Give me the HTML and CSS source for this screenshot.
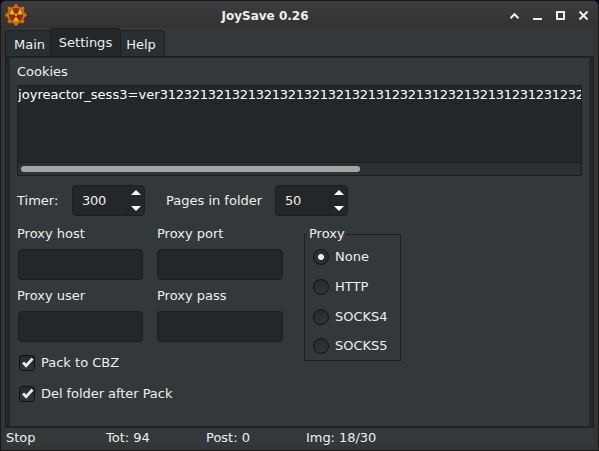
FILE: index.html
```html
<!DOCTYPE html>
<html lang="en">
<head>
<meta charset="utf-8">
<title>JoySave 0.26</title>
<link rel="stylesheet" href="styles.css">
</head>
<body>
<div class="window">
  <header class="titlebar">
    <svg class="app-icon" width="22" height="22" viewBox="0 0 22 22">
      <g fill="#cf7009">
        <circle cx="11" cy="11" r="9"/>
        <circle cx="11" cy="1.9" r="1.8"/><circle cx="11" cy="20.1" r="1.8"/>
        <circle cx="1.9" cy="11" r="1.8"/><circle cx="20.1" cy="11" r="1.8"/>
        <circle cx="4.4" cy="4.4" r="1.8"/><circle cx="17.6" cy="4.4" r="1.8"/>
        <circle cx="4.4" cy="17.6" r="1.8"/><circle cx="17.6" cy="17.6" r="1.8"/>
      </g>
      <circle cx="11" cy="11" r="7" fill="#982705"/>
      <g fill="#dcc013">
        <path d="M9.8 10.6H4.4Q4.8 7 7.4 5Z"/>
        <path d="M12.2 10.6H17.6Q17.2 7 14.6 5Z"/>
        <path d="M11 12.2L8 17Q11 18.4 14 17Z"/>
        <circle cx="11" cy="10.8" r="1.2"/>
      </g>
    </svg>
    <h1 class="title">JoySave 0.26</h1>
    <svg class="controls" width="80" height="12" viewBox="0 0 80 12" fill="none" stroke="#eeeeec" stroke-width="2">
      <path d="M0.5 8.2L4.5 4.2L8.5 8.2"/>
      <path d="M23 9h9"/>
      <path d="M47 2h7v7h-7z"/>
      <path d="M69.5 1.5l8 8M77.5 1.5l-8 8"/>
    </svg>
  </header>
  <main class="client">
    <nav class="tabs">
      <span class="tab tab-main">Main</span>
      <span class="tab tab-active">Settings</span>
      <span class="tab tab-help">Help</span>
    </nav>
    <section class="page">
      <div class="label">Cookies</div>
      <div class="textarea">
        <div class="cookie-text"><span class="key">joyreactor_sess3=ver</span><span class="digits">31232132132132132132132132131232131232132131231231232</span></div>
        <div class="scrollbar"><div class="thumb"></div></div>
      </div>
      <div class="spins">
        <span class="timer-label">Timer:</span>
        <div class="spin"><span class="value">300</span><span class="arrows"><i class="up"></i><i class="down"></i></span></div>
        <span class="pages-label">Pages in folder</span>
        <div class="spin"><span class="value">50</span><span class="arrows"><i class="up"></i><i class="down"></i></span></div>
      </div>
      <div class="lower">
        <div class="left">
          <div class="fields">
            <label class="field"><span>Proxy host</span><b class="entry"></b></label>
            <label class="field"><span>Proxy port</span><b class="entry"></b></label>
            <label class="field"><span>Proxy user</span><b class="entry"></b></label>
            <label class="field"><span>Proxy pass</span><b class="entry"></b></label>
          </div>
          <div class="check"><svg class="box" width="16" height="16" viewBox="0 0 16 16"><path d="M3.5 7.4L7 11L14.3 3" fill="none" stroke="#eeeeec" stroke-width="3.2"/></svg><span>Pack to CBZ</span></div>
          <div class="check"><svg class="box" width="16" height="16" viewBox="0 0 16 16"><path d="M3.5 7.4L7 11L14.3 3" fill="none" stroke="#eeeeec" stroke-width="3.2"/></svg><span class="long">Del folder after Pack</span></div>
        </div>
        <fieldset class="group">
          <legend>Proxy</legend>
          <div class="radios">
            <div class="radio"><i class="dot on"></i><span>None</span></div>
            <div class="radio"><i class="dot"></i><span>HTTP</span></div>
            <div class="radio"><i class="dot"></i><span>SOCKS4</span></div>
            <div class="radio"><i class="dot"></i><span>SOCKS5</span></div>
          </div>
        </fieldset>
      </div>
    </section>
    <footer class="status">
      <span>Stop</span><span>Tot: 94</span><span>Post: 0</span><span class="long">Img: 18/30</span>
    </footer>
  </main>
</div>
</body>
</html>
```
FILE: styles.css
```css
* { box-sizing: border-box; }
body {
  margin: 0;
  width: 599px;
  height: 451px;
  overflow: hidden;
  background: #05051c;
  font: 13px/16px "DejaVu Sans", sans-serif;
  color: #eeeeec;
}
.window {
  display: flex;
  flex-direction: column;
  width: 599px;
  height: 451px;
  padding: 0 4px 4px;
  background: #353333;
  border: 1px solid #191819;
  border-radius: 6px 6px 0 0;
}
.titlebar {
  display: flex;
  flex: none;
  align-items: center;
  height: 27px;
  margin: 0 -4px;
  padding: 0 8px 0 4px;
  border-radius: 5px 5px 0 0;
  background: linear-gradient(#3d3d3d, #333232);
}
.app-icon { margin-top: 1px; }
.title {
  flex: 1;
  margin: 2px 0 0;
  padding-right: 7px;
  font: bold 12px/16px "DejaVu Sans", sans-serif;
  text-align: center;
}
.controls { margin-top: 3px; flex: none; }
.client {
  display: flex;
  flex-direction: column;
  flex: 1;
  background: #33393b;
}
.tabs {
  display: flex;
  align-items: flex-end;
  height: 28px;
}
.tab {
  height: 26px;
  padding-top: 6px;
  text-align: center;
  background: #2a2f31;
  border: 1px solid #1c1f21;
  border-bottom: 0;
}
.tab-main { width: 45px; border-radius: 4px 0 0 0; border-right: 0; padding-left: 3px; }
.tab-active { width: 71px; height: 28px; border-radius: 4px 4px 0 0; background: #232729; }
.tab-help { width: 44px; border-radius: 0 4px 0 0; border-left: 0; padding-right: 3px; }
.page {
  flex: none;
  height: 372px;
  padding: 5px 7px 0;
  border: solid #222628;
  border-width: 2px 5px 2px;
  outline: 1px solid #1c1f21;
  outline-offset: -1px;
}
.label { height: 21px; padding-top: 1px; }
.textarea {
  display: flex;
  flex-direction: column;
  width: 565px;
  height: 91px;
  margin-top: 1px;
  overflow: hidden;
  background: #232729;
  border: 1px solid #1c1f21;
}
.cookie-text { flex: 1; padding-top: 1px; white-space: nowrap; color: #fff; }
.key { letter-spacing: 0.04px; }
.digits { letter-spacing: -0.27px; }
.scrollbar { height: 13px; padding: 3px; background: #2b3032; border-top: 1px solid #1c1f21; }
.thumb { width: 339px; height: 6px; border-radius: 3px; background: #a4a5a2; }
.spins { display: flex; align-items: center; margin-top: 8px; height: 33px; }
.timer-label { width: 55px; padding-top: 1px; }
.pages-label { width: 130px; padding: 1px 0 0 21px; }
.spin {
  display: flex;
  width: 73px;
  height: 31px;
  background: #232729;
  border: 1px solid #1c1f21;
  border-radius: 4px;
}
.value { flex: 1; padding: 7px 0 0 9px; letter-spacing: -0.27px; }
.arrows {
  display: flex;
  flex-direction: column;
  justify-content: space-between;
  align-items: center;
  width: 17px;
  padding: 4px 1px 4px 0;
  border-left: 1px solid #1f2325;
}
.up, .down { width: 0; height: 0; border: 5px solid transparent; }
.up { border-top: 0; border-bottom: 5px solid #fff; }
.down { border-bottom: 0; border-top: 5px solid #fff; }
.lower { display: flex; margin-top: 8px; }
.left { width: 287px; }
.fields {
  display: grid;
  grid-template-columns: 140px 126px;
  grid-auto-rows: 62px;
  margin-bottom: -2px;
}
.field { display: flex; flex-direction: column; }
.field span { height: 24px; padding-top: 1px; }
.entry {
  width: 126px;
  height: 31px;
  background: #232729;
  border: 1px solid #1c1f21;
  border-radius: 4px;
}
.field:nth-child(odd) .entry { margin-left: 1px; width: 125px; }
.check { display: flex; align-items: center; gap: 6px; height: 31px; padding-left: 2px; }
.long { letter-spacing: -0.05px; }
.box { border: 1px solid #101213; border-radius: 3px; background: linear-gradient(#25292b, #303537); }
.group {
  width: 97px;
  height: 136px;
  margin: 0;
  padding: 0 0 0 8px;
  border: 1px solid #1c1f21;
}
.group legend { height: 19px; margin-left: -6px; padding: 1px 1px 0 2px; }
.radios { margin-top: -2px; }
.radio { display: flex; align-items: center; gap: 6px; height: 30px; }
.radio:last-child { height: 28px; }
.dot {
  width: 16px;
  height: 16px;
  border: 1px solid #101213;
  border-radius: 50%;
  background: linear-gradient(#272b2d, #303537);
}
.on { background: radial-gradient(circle, #eeeeec 2.6px, #2a2f31 3.4px); }
.status { display: grid; grid-template-columns: 100px 100px 100px 1fr; padding: 2px 0 0 1px; }
```
